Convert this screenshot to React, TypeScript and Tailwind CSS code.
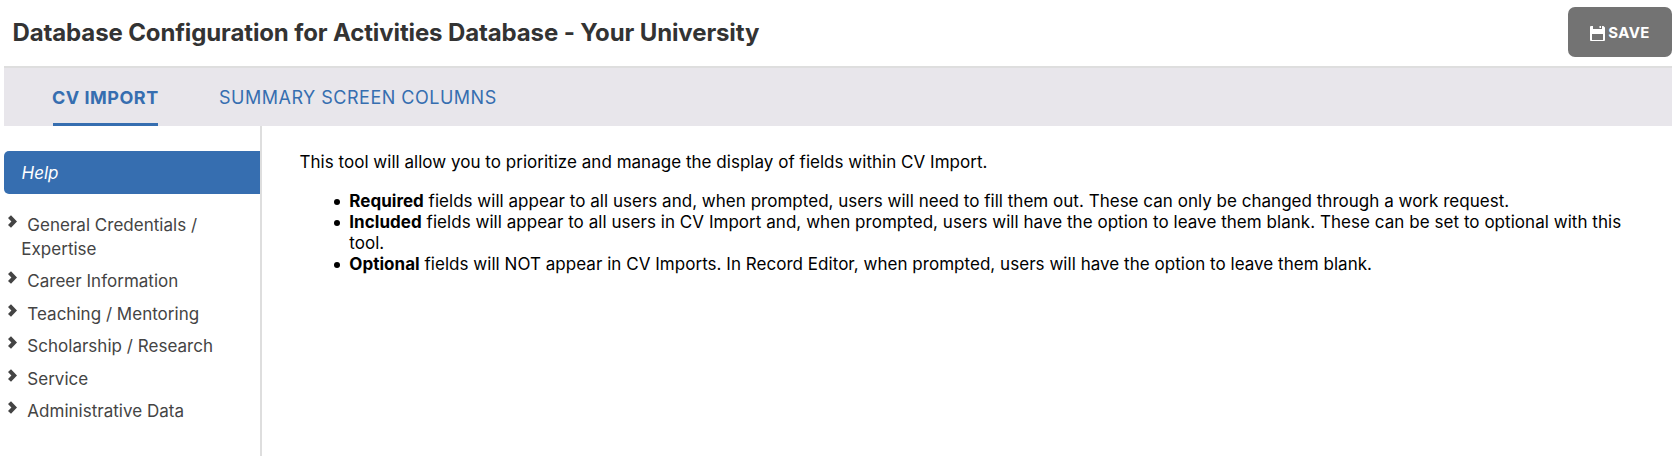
import { useState } from 'react';

const tabs = ['CV IMPORT', 'SUMMARY SCREEN COLUMNS'];

const sections = [
  'General Credentials / Expertise',
  'Career Information',
  'Teaching / Mentoring',
  'Scholarship / Research',
  'Service',
  'Administrative Data',
];

const bullet =
  "relative before:absolute before:-left-[15px] before:top-2 before:size-1.5 before:rounded-full before:bg-black before:content-['']";

const SaveIcon = () => (
  <svg width="15" height="15" viewBox="0 0 15 15" className="shrink-0" aria-hidden="true">
    <path
      fill="#fff"
      fillRule="evenodd"
      d="M0 1Q0 0 1 0H3V3H12V0H13.5L15 1.5V14Q15 15 14 15H1Q0 15 0 14ZM2 8V14H13V8ZM9.5 0H11V2H9.5Z"
    />
  </svg>
);

const Chevron = () => (
  <svg width="9" height="13" viewBox="0 0 9 13" className="absolute left-1 top-[2px]" aria-hidden="true">
    <path d="M0 3L3 0.2L9 6.5L3 12.8L0 10L3.4 6.5Z" fill="#444" />
  </svg>
);

const App = () => {
  const [activeTab, setActiveTab] = useState(tabs[0]);

  return (
    <div className="h-[463px] bg-white pl-1 pr-[5px] font-['Inter',sans-serif] text-[17px] text-black">
      {/* Header */}
      <header className="flex h-[68px] items-start justify-between border-b-2 border-[#dedede]">
        <h1 className="pl-[8.5px] pt-[17px] text-[24px] font-bold leading-[32px] tracking-[-0.125px] text-[#333]">
          Database Configuration for Activities Database - Your University
        </h1>
        <button className="mt-[7px] flex h-[50px] w-[104px] items-center justify-center gap-[3px] rounded-[7px] bg-[#737373] pt-[2px] text-[15px] font-bold tracking-[0.4px] text-white">
          <SaveIcon />
          SAVE
        </button>
      </header>

      {/* Tabs */}
      <nav className="flex h-[58px] gap-[62px] bg-[#e8e6eb] pl-[49px]">
        {tabs.map((tab) => (
          <button
            key={tab}
            onClick={() => setActiveTab(tab)}
            className={`border-b-[3px] pt-[3px] text-[18px] text-[#366eb0] ${
              activeTab === tab
                ? 'w-[105px] whitespace-nowrap border-[#366eb0] font-bold tracking-[0.5px]'
                : 'border-transparent font-normal tracking-[0.5px]'
            }`}
          >
            <span className="-ml-px">{tab}</span>
          </button>
        ))}
      </nav>

      <div className="flex h-[330px]">
        {/* Sidebar */}
        <aside className="w-[258px] shrink-0 border-r-2 border-[#dedede] pt-[25px]">
          <div className="flex h-[43px] items-center rounded-l-[5px] bg-[#366eb0] pl-[17.5px] pt-[2px] italic text-white">
            Help
          </div>
          <ul className="pt-[18.8px]">
            {sections.map((name) => (
              <li key={name} className="relative pb-[8.5px] pl-[17.3px] pr-8 leading-6 tracking-[0.02px] text-[#444]">
                <Chevron />
                <span className="ml-1.5">{name}</span>
              </li>
            ))}
          </ul>
        </aside>

        {/* Help text */}
        <main className="flex-1 pl-[37.5px] pr-[40px] pt-[26px] leading-[21px]">
          <p className="tracking-[0.025px]">
            This tool will allow you to prioritize and manage the display of fields within CV Import.
          </p>
          <ul className="mt-[18px] pl-[49.8px]">
            <li className={`${bullet} tracking-[0.02px]`}>
              <b>Required</b> fields will appear to all users and, when prompted, users will need to fill them out.
              These can only be changed through a work request.
            </li>
            <li className={`${bullet} tracking-[0.042px]`}>
              <b>Included</b> fields will appear to all users in CV Import and, when prompted, users will have the
              option to leave them blank. These can be set to optional with this tool.
            </li>
            <li className={`${bullet} tracking-[0.034px]`}>
              <b>Optional</b> fields will NOT appear in CV Imports. In Record Editor, when prompted, users will have
              the option to leave them blank.
            </li>
          </ul>
        </main>
      </div>
    </div>
  );
};

export default App;
